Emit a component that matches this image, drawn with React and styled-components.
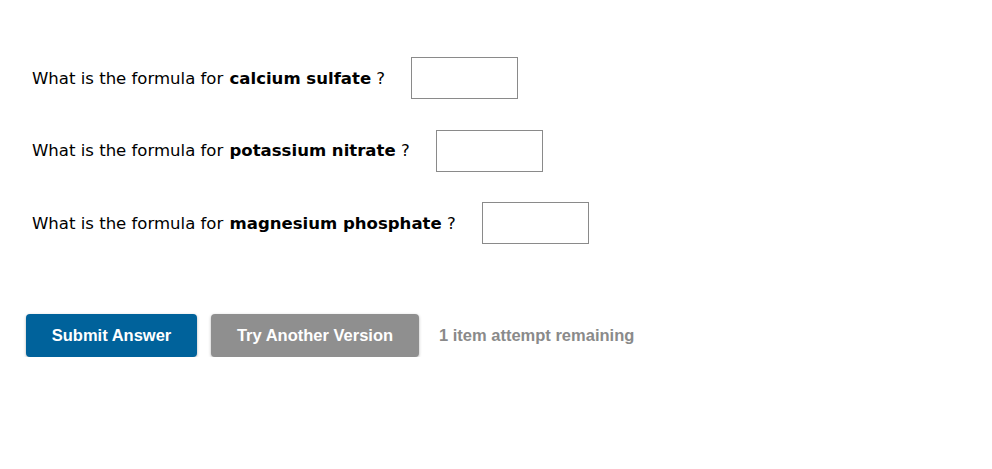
import React from "react";
import styled, { createGlobalStyle } from "styled-components";

const GlobalStyle = createGlobalStyle`
  body {
    margin: 0;
    background: #ffffff;
    font-family: "DejaVu Sans", Verdana, sans-serif;
    color: #000;
  }
`;

const Page = styled.div`
  padding: 57px 26px 0;
`;

const QuestionList = styled.div`
  display: flex;
  flex-direction: column;
  gap: 30.5px;
  padding-left: 6px;
`;

const Row = styled.div`
  display: flex;
  align-items: center;
  height: 42px;
  font-size: 16.55px;
`;

const Prompt = styled.span`
  white-space: pre;
`;

const Compound = styled.b`
  margin-left: 1px;
`;

const AnswerBox = styled.input`
  box-sizing: border-box;
  width: 107px;
  height: 42px;
  margin-left: ${(p) => p.gap}px;
  border: 1px solid #8a8a8a;
  border-radius: 0;
  padding: 0 6px;
  font-size: 16px;
  outline: none;
`;

const Actions = styled.div`
  display: flex;
  align-items: center;
  gap: 14px;
  margin-top: 70px;
  font-family: "Liberation Sans", Arial, sans-serif;
`;

const Button = styled.button`
  box-sizing: border-box;
  height: 43px;
  width: ${(p) => p.width}px;
  border: none;
  border-radius: 4px;
  background: ${(p) => p.bg};
  color: #ffffff;
  font-family: "Liberation Sans", Arial, sans-serif;
  font-weight: bold;
  font-size: 16.5px;
  box-shadow: 0 1px 3px rgba(0, 0, 0, 0.3);
  cursor: pointer;
`;

const Remaining = styled.span`
  margin-left: 6px;
  color: #8a8a8a;
  font-weight: bold;
  font-size: 16.5px;
`;

const questions = [
  { name: "calcium sulfate" },
  { name: "potassium nitrate" },
  { name: "magnesium phosphate" },
];

export default function App() {
  return (
    <>
      <GlobalStyle />
      <Page>
        <QuestionList>
          {questions.map((q) => (
            <Row key={q.name}>
              <Prompt>
                What is the formula for <Compound>{q.name}</Compound> ?
              </Prompt>
              <AnswerBox gap={26} type="text" />
            </Row>
          ))}
        </QuestionList>
        <Actions>
          <Button bg="#00629b" width={171}>Submit Answer</Button>
          <Button bg="#8f8f8f" width={208}>Try Another Version</Button>
          <Remaining>1 item attempt remaining</Remaining>
        </Actions>
      </Page>
    </>
  );
}
